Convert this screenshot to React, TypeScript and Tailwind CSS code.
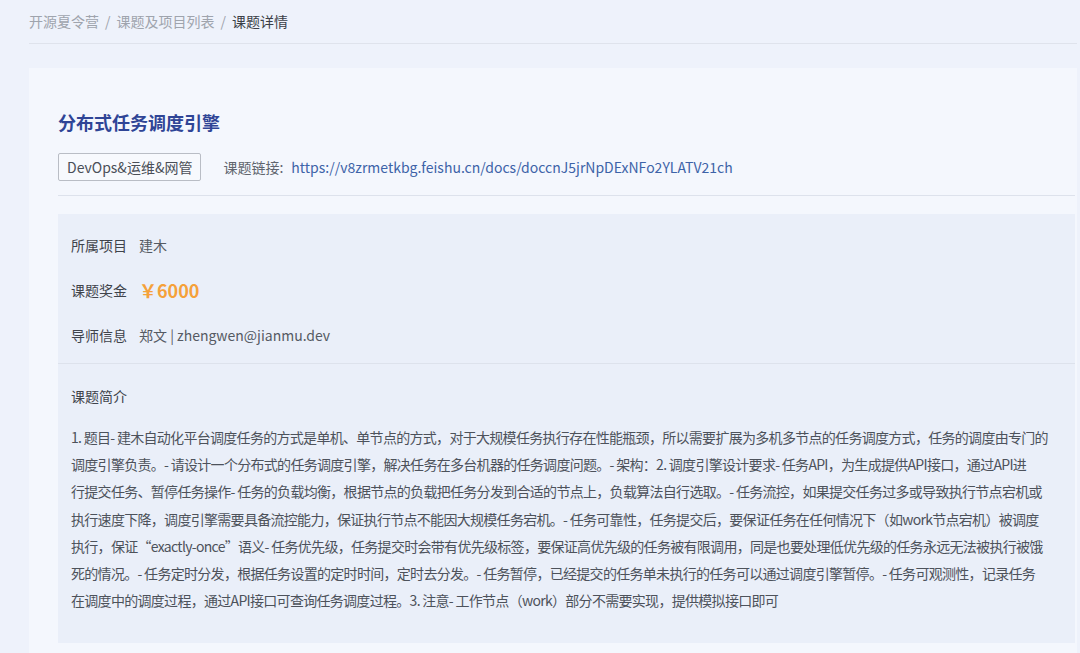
const font = { fontFamily: '"Noto Sans CJK SC", "Noto Sans", sans-serif' };

const info = [
  { label: '所属项目', value: <span className="text-[#555a63]">建木</span> },
  {
    label: '课题奖金',
    value: <span className="text-[18px] font-bold text-[#f5a13a]">￥6000</span>,
  },
  { label: '导师信息', value: <span className="text-[#555a63]">郑文 | zhengwen@jianmu.dev</span> },
];

// lines broken where the original page wraps them
const introLines = [
  '1. 题目- 建木自动化平台调度任务的方式是单机、单节点的方式，对于大规模任务执行存在性能瓶颈，所以需要扩展为多机多节点的任务调度方式，任务的调度由专门的',
  '调度引擎负责。- 请设计一个分布式的任务调度引擎，解决任务在多台机器的任务调度问题。- 架构：2. 调度引擎设计要求- 任务API，为生成提供API接口，通过API进',
  '行提交任务、暂停任务操作- 任务的负载均衡，根据节点的负载把任务分发到合适的节点上，负载算法自行选取。- 任务流控，如果提交任务过多或导致执行节点宕机或',
  '执行速度下降，调度引擎需要具备流控能力，保证执行节点不能因大规模任务宕机。- 任务可靠性，任务提交后，要保证任务在任何情况下（如work节点宕机）被调度',
  '执行，保证“exactly-once”语义- 任务优先级，任务提交时会带有优先级标签，要保证高优先级的任务被有限调用，同是也要处理低优先级的任务永远无法被执行被饿',
  '死的情况。- 任务定时分发，根据任务设置的定时时间，定时去分发。- 任务暂停，已经提交的任务单未执行的任务可以通过调度引擎暂停。- 任务可观测性，记录任务',
  '在调度中的调度过程，通过API接口可查询任务调度过程。3. 注意- 工作节点（work）部分不需要实现，提供模拟接口即可',
];

export default function App() {
  return (
    <div className="w-[1080px] h-[653px] overflow-hidden bg-[#eef2fb] text-[14px]" style={font}>
      <div className="pl-[29px] pr-[3px]">
        <div className="h-[44px] flex items-center border-b border-[#dfe3ec] text-[#9fa4ad]">
          <span>开源夏令营</span>
          <span className="mx-[6px]">/</span>
          <span>课题及项目列表</span>
          <span className="mx-[6px]">/</span>
          <span className="text-[#3b3f47]">课题详情</span>
        </div>

        <div className="mt-[24px] bg-[#f4f7fd] pl-[29px] pr-[2px] pt-[42px] pb-[10px]">
          <h1 className="text-[18px] leading-[24px] font-bold text-[#2f4596]">分布式任务调度引擎</h1>
          <div className="mt-[19px] flex items-center pb-[14px] border-b border-[#dde2ec]">
            <span className="h-[28px] px-[8px] flex items-center border border-[#b9bdc5] rounded-[2px] bg-[#f7f9fd] text-[#4a4f58]">
              DevOps&运维&网管
            </span>
            <span className="ml-[22px] text-[#60656e]">课题链接:</span>
            <span className="ml-[8px] text-[#3d63a8]">https://v8zrmetkbg.feishu.cn/docs/doccnJ5jrNpDExNFo2YLATV21ch</span>
          </div>

          <div className="mt-[18px] bg-[#eaeff9] h-[429px]">
            <div className="px-[13px] pt-[21px] pb-[18px] border-b border-[#dde2ec] flex flex-col gap-[25px]">
              {info.map((row) => (
                <div key={row.label} className="flex items-center h-[20px]">
                  <span className="w-[68px] text-[#3f434b]">{row.label}</span>
                  {row.value}
                </div>
              ))}
            </div>
            <div className="px-[13px] pt-[22px]">
              <div className="text-[#3f434b] leading-[20px]">课题简介</div>
              <div className="mt-[18px] leading-[27.2px] text-[#4d525b] tracking-[-0.7px]">
                {introLines.map((line) => (
                  <div key={line} className="whitespace-nowrap">{line}</div>
                ))}
              </div>
            </div>
          </div>
        </div>
      </div>
    </div>
  );
}
